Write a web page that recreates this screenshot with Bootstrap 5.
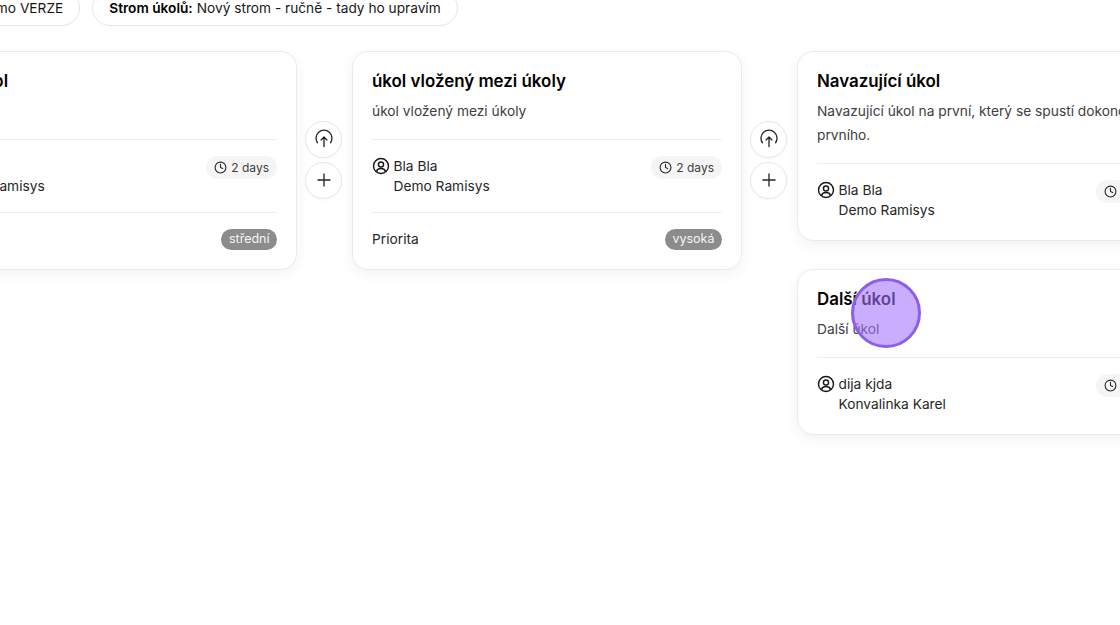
<!DOCTYPE html>
<html lang="cs">
<head>
<meta charset="utf-8">
<title>Strom úkolů</title>
<link href="https://cdn.jsdelivr.net/npm/bootstrap@5.3.0/dist/css/bootstrap.min.css" rel="stylesheet">
<style>
html,body{height:100%;background:#fff;}
body{font-family:Inter,"Liberation Sans",sans-serif;color:#171717;overflow:hidden;}
.stage{position:relative;width:1120px;height:625px;overflow:hidden;}
.pill-bar{margin-top:-10px;margin-left:-39px;height:36px;}
.info-pill{height:36px;border:1px solid #e5e5e5;border-radius:18px;padding:0 16px;font-size:13.7px;display:flex;align-items:center;background:#fff;white-space:nowrap;}
.info-pill b{font-weight:600;color:#000;margin-right:4px;}
.tree-row{margin-top:25px;margin-left:-93px;width:1400px;}
.task-card{width:390px;flex:none;background:#fff;border:1px solid #ebebeb;border-radius:16px;padding:19px 19px 4px;box-shadow:0 4px 14px rgba(0,0,0,.05);}
.task-title{font-size:16.9px;line-height:20px;font-weight:600;color:#000;margin:0 0 8px;}
.task-desc{font-size:13.75px;line-height:24px;color:#404040;margin:0;}
.task-sep{height:1px;background:#ededed;}
.task-desc + .task-sep{margin-top:16px;}
.people{padding:16px 0;font-size:13.75px;line-height:20px;color:#262626;}
.person-icon{width:18px;height:18px;margin-right:3.5px;flex:none;}
.person-sub{padding-left:21.5px;}
.time-chip{height:23px;border-radius:12px;background:#f5f5f5;padding:0 8px;font-size:12px;color:#404040;display:flex;align-items:center;gap:4.5px;white-space:nowrap;}
.time-chip svg{width:13px;height:13px;}
.prio-line{height:52px;font-size:13.75px;color:#262626;}
.prio-tag{height:21px;border-radius:11px;background:#8c8c8c;color:#f5f5f5;font-size:12.5px;padding:0 7.5px;display:flex;align-items:center;}
.link-col{width:55px;flex:none;gap:4px;padding-right:2px;padding-bottom:2px;}
.round-btn{width:37px;height:37px;border:1px solid #e8e8e8;border-radius:50%;background:#fff;padding:0;display:flex;align-items:center;justify-content:center;box-shadow:0 1px 3px rgba(0,0,0,.04);}
.stack{gap:28px;flex:none;}
.click-mark{position:absolute;left:851px;top:278px;width:70px;height:70px;border-radius:50%;background:rgba(163,113,255,.58);border:3px solid #8b5fe8;}
</style>
</head>
<body>
<div class="stage">
  <div class="pill-bar d-flex gap-2">
    <div class="info-pill me-1">Demo VERZE</div>
    <div class="info-pill"><b>Strom úkolů:</b> Nový strom - ručně - tady ho upravím</div>
  </div>

  <div class="tree-row d-flex align-items-start">
    <div class="d-flex align-items-center">
      <div class="task-card">
        <h3 class="task-title">První úkol</h3>
        <p class="task-desc">První úkol</p>
        <div class="task-sep"></div>
        <div class="people d-flex justify-content-between align-items-start">
          <div>
            <div class="d-flex align-items-center"><svg class="person-icon" viewBox="0 0 24 24" fill="none" stroke="#171717" stroke-width="1.900"><circle cx="12" cy="12" r="10"/><circle cx="12" cy="10" r="3.4"/><path d="M6 19.200c1-2.600 3.200-3.800 6-3.800s5 1.200 6 3.800"/></svg>Bla Bla</div>
            <div class="person-sub">Demo Ramisys</div>
          </div>
          <div class="time-chip"><svg viewBox="0 0 24 24" fill="none" stroke="#262626" stroke-width="2" stroke-linecap="round"><circle cx="12" cy="12" r="10"/><path d="M12 6v6l4 2"/></svg>2 days</div>
        </div>
        <div class="task-sep"></div>
        <div class="prio-line d-flex justify-content-between align-items-center"><span>Priorita</span><span class="prio-tag">střední</span></div>
      </div>
      <div class="link-col d-flex flex-column align-items-center">
        <button class="round-btn" type="button" aria-label="Nahrát"><svg width="20" height="20" viewBox="0 0 24 24" fill="none" stroke="#262626" stroke-width="1.600" stroke-linecap="round" stroke-linejoin="round"><path d="M4.100 16.500A9.600 9.600 0 1 1 19.900 16.500"/><path d="M12 21V9.600M8.500 13.100 12 9.600l3.500 3.500"/></svg></button>
        <button class="round-btn" type="button" aria-label="Přidat"><svg width="20" height="20" viewBox="0 0 24 24" fill="none" stroke="#262626" stroke-width="1.600" stroke-linecap="round"><path d="M12 4.750v14.500M4.750 12h14.500"/></svg></button>
      </div>
    </div>

    <div class="d-flex align-items-center">
      <div class="task-card">
        <h3 class="task-title">úkol vložený mezi úkoly</h3>
        <p class="task-desc">úkol vložený mezi úkoly</p>
        <div class="task-sep"></div>
        <div class="people d-flex justify-content-between align-items-start">
          <div>
            <div class="d-flex align-items-center"><svg class="person-icon" viewBox="0 0 24 24" fill="none" stroke="#171717" stroke-width="1.900"><circle cx="12" cy="12" r="10"/><circle cx="12" cy="10" r="3.4"/><path d="M6 19.200c1-2.600 3.200-3.800 6-3.800s5 1.200 6 3.800"/></svg>Bla Bla</div>
            <div class="person-sub">Demo Ramisys</div>
          </div>
          <div class="time-chip"><svg viewBox="0 0 24 24" fill="none" stroke="#262626" stroke-width="2" stroke-linecap="round"><circle cx="12" cy="12" r="10"/><path d="M12 6v6l4 2"/></svg>2 days</div>
        </div>
        <div class="task-sep"></div>
        <div class="prio-line d-flex justify-content-between align-items-center"><span>Priorita</span><span class="prio-tag">vysoká</span></div>
      </div>
      <div class="link-col d-flex flex-column align-items-center">
        <button class="round-btn" type="button" aria-label="Nahrát"><svg width="20" height="20" viewBox="0 0 24 24" fill="none" stroke="#262626" stroke-width="1.600" stroke-linecap="round" stroke-linejoin="round"><path d="M4.100 16.500A9.600 9.600 0 1 1 19.900 16.500"/><path d="M12 21V9.600M8.500 13.100 12 9.600l3.500 3.500"/></svg></button>
        <button class="round-btn" type="button" aria-label="Přidat"><svg width="20" height="20" viewBox="0 0 24 24" fill="none" stroke="#262626" stroke-width="1.600" stroke-linecap="round"><path d="M12 4.750v14.500M4.750 12h14.500"/></svg></button>
      </div>
    </div>

    <div class="stack d-flex flex-column">
      <div class="task-card">
        <h3 class="task-title">Navazující úkol</h3>
        <p class="task-desc">Navazující úkol na první, který se spustí dokončením prvního.</p>
        <div class="task-sep"></div>
        <div class="people d-flex justify-content-between align-items-start">
          <div>
            <div class="d-flex align-items-center"><svg class="person-icon" viewBox="0 0 24 24" fill="none" stroke="#171717" stroke-width="1.900"><circle cx="12" cy="12" r="10"/><circle cx="12" cy="10" r="3.4"/><path d="M6 19.200c1-2.600 3.200-3.800 6-3.800s5 1.200 6 3.800"/></svg>Bla Bla</div>
            <div class="person-sub">Demo Ramisys</div>
          </div>
          <div class="time-chip"><svg viewBox="0 0 24 24" fill="none" stroke="#262626" stroke-width="2" stroke-linecap="round"><circle cx="12" cy="12" r="10"/><path d="M12 6v6l4 2"/></svg>2 days</div>
        </div>
      </div>
      <div class="task-card">
        <h3 class="task-title">Další úkol</h3>
        <p class="task-desc">Další úkol</p>
        <div class="task-sep"></div>
        <div class="people d-flex justify-content-between align-items-start">
          <div>
            <div class="d-flex align-items-center"><svg class="person-icon" viewBox="0 0 24 24" fill="none" stroke="#171717" stroke-width="1.900"><circle cx="12" cy="12" r="10"/><circle cx="12" cy="10" r="3.4"/><path d="M6 19.200c1-2.600 3.200-3.800 6-3.800s5 1.200 6 3.800"/></svg>dija kjda</div>
            <div class="person-sub">Konvalinka Karel</div>
          </div>
          <div class="time-chip"><svg viewBox="0 0 24 24" fill="none" stroke="#262626" stroke-width="2" stroke-linecap="round"><circle cx="12" cy="12" r="10"/><path d="M12 6v6l4 2"/></svg>2 days</div>
        </div>
      </div>
    </div>
  </div>

  <div class="click-mark"></div>
</div>
<script src="https://cdn.jsdelivr.net/npm/bootstrap@5.3.0/dist/js/bootstrap.bundle.min.js"></script>
</body>
</html>
